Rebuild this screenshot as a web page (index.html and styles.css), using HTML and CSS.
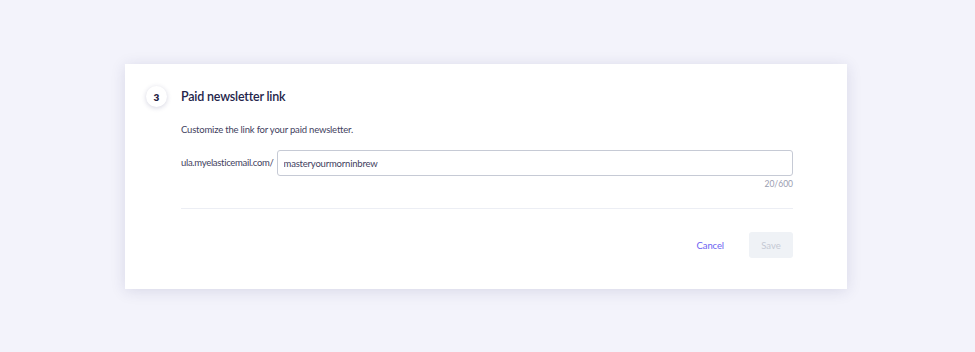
FILE: index.html
```
<!DOCTYPE html>
<html lang="en">
<head>
<meta charset="utf-8">
<title>Paid newsletter link</title>
<link rel="stylesheet" href="styles.css">
</head>
<body>
<main class="page">
  <section class="card">
    <div class="step">
      <div class="step-num">3</div>
      <h2 class="step-title">Paid newsletter link</h2>
    </div>
    <div class="content">
      <p class="desc">Customize the link for your paid newsletter.</p>
      <div class="field">
        <span class="prefix">ula.myelasticemail.com/</span>
        <div class="input-wrap">
          <input class="input" type="text" value="masteryourmorninbrew">
          <div class="counter">20/600</div>
        </div>
      </div>
      <hr class="divider">
      <div class="actions">
        <button class="btn-cancel" type="button">Cancel</button>
        <button class="btn-save" type="button" disabled>Save</button>
      </div>
    </div>
  </section>
</main>
</body>
</html>
```
FILE: styles.css
```
* { box-sizing: border-box; }
html, body { margin: 0; padding: 0; }
body {
  background: #f3f3fb;
  font-family: Lato, "Liberation Sans", sans-serif;
  color: #1f2041;
  width: 975px;
  height: 352px;
  overflow: hidden;
}
.page {
  padding: 64px 128px 0 125px;
}
.card {
  width: 722px;
  height: 225px;
  background: #ffffff;
  box-shadow: 0 2px 14px rgba(40, 40, 100, 0.13);
  padding: 22px 54px 0 21px;
}
.step {
  display: flex;
  align-items: center;
  gap: 14px;
}
.step-num {
  width: 21px;
  height: 21px;
  border-radius: 50%;
  background: #fff;
  box-shadow: 0 1px 5px rgba(40, 40, 100, 0.2);
  display: flex;
  align-items: center;
  justify-content: center;
  font-size: 10px;
  font-weight: 800;
  color: #1f2041;
}
.step-title {
  margin: 0;
  font-size: 12.5px;
  line-height: 16px;
  font-weight: 600;
  letter-spacing: -0.2px;
  color: #23244a;
}
.content {
  padding-left: 35px;
}
.desc {
  margin: 17px 0 0;
  font-size: 9.5px;
  line-height: 12px;
  letter-spacing: -0.2px;
  color: #3f4160;
}
.field {
  margin-top: 14px;
  display: flex;
  align-items: flex-start;
  gap: 3px;
}
.prefix {
  font-size: 9.5px;
  letter-spacing: -0.3px;
  color: #3f4160;
  line-height: 26px;
}
.input-wrap {
  flex: 1;
  display: flex;
  flex-direction: column;
}
.input {
  height: 26px;
  width: 100%;
  border: 1px solid #c6cad5;
  border-radius: 3px;
  padding: 0 6px;
  font-family: inherit;
  font-size: 9.5px;
  letter-spacing: -0.2px;
  color: #3f4160;
  outline: none;
}
.counter {
  text-align: right;
  font-size: 8.5px;
  line-height: 10px;
  color: #9a9db0;
  margin-top: 3px;
}
.divider {
  margin: 19px 0 0;
  border: 0;
  border-top: 1px solid #eceef4;
}
.actions {
  margin-top: 23px;
  display: flex;
  justify-content: flex-end;
  align-items: center;
  gap: 25px;
}
.btn-cancel {
  background: none;
  border: 0;
  padding: 0;
  font-family: inherit;
  font-size: 9.5px;
  letter-spacing: -0.1px;
  color: #6c63f2;
  cursor: pointer;
}
.btn-save {
  width: 44px;
  height: 26px;
  border: 0;
  border-radius: 3px;
  background: #eff2f6;
  font-family: inherit;
  font-size: 9.5px;
  color: #c5c9d4;
}
```
